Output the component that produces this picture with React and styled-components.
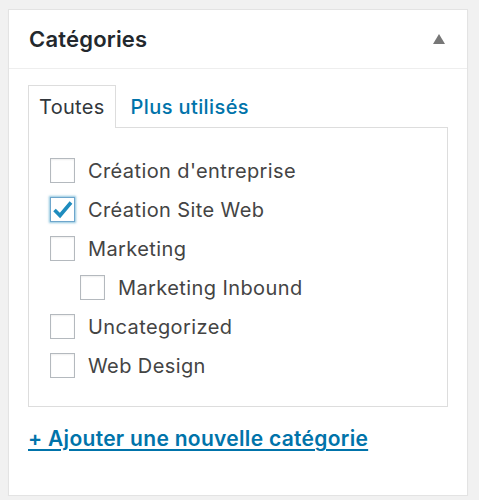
import styled, { createGlobalStyle } from "styled-components";

const Global = createGlobalStyle`
  body {
    margin: 0;
    background: #f1f1f1;
    font-family: Inter, "Noto Sans", "DejaVu Sans", sans-serif;
  }
`;

const Panel = styled.div`
  margin: 9px 0 0 8px;
  width: 458px;
  background: #fff;
  border: 1px solid #e3e3e3;
  box-shadow: 0 1px 1px rgba(0, 0, 0, 0.04);
`;

const Header = styled.div`
  height: 58px;
  padding: 0 22px 0 20px;
  display: flex;
  align-items: center;
  justify-content: space-between;
  border-bottom: 1px solid #eeeeee;
`;

const Title = styled.h2`
  margin: 0;
  font-size: 22px;
  letter-spacing: 0.2px;
  font-weight: 600;
  color: #23282d;
`;

const Toggle = styled.span`
  width: 0;
  height: 0;
  border-left: 6px solid transparent;
  border-right: 6px solid transparent;
  border-bottom: 10px solid #777;
`;

const Body = styled.div`
  padding: 16px 19px 44px 19px;
`;

const Tabs = styled.div`
  display: flex;
  align-items: flex-end;
  gap: 14px;
`;

const Tab = styled.div`
  height: 42px;
  padding: 0 ${(p) => (p.$active ? "10px" : "0")};
  display: flex;
  align-items: center;
  font-size: 20px;
  letter-spacing: ${(p) => (p.$active ? "0.3px" : "0.4px")};
  color: ${(p) => (p.$active ? "#32373c" : "#0073aa")};
  font-weight: ${(p) => (p.$active ? 400 : 500)};
  background: ${(p) => (p.$active ? "#fff" : "transparent")};
  border: 1px solid ${(p) => (p.$active ? "#dddddd" : "transparent")};
  border-bottom: none;
  margin-bottom: -1px;
  position: relative;
`;

const TabPanel = styled.div`
  box-sizing: border-box;
  width: 420px;
  border: 1px solid #dddddd;
  padding: 30px 0 28px 21px;
`;

const List = styled.ul`
  list-style: none;
  margin: 0;
  padding: 0;
  display: flex;
  flex-direction: column;
  gap: 14px;
`;

const Children = styled(List)`
  margin-top: 14px;
  margin-left: 30px;
`;

const Row = styled.label`
  display: flex;
  align-items: center;
  gap: 13px;
  font-size: 20px;
  letter-spacing: 0.4px;
  color: #444;
  height: 25px;
`;

const Box = styled.span`
  box-sizing: border-box;
  flex: none;
  width: 25px;
  height: 25px;
  border: 1px solid ${(p) => (p.$checked ? "#6ea6cc" : "#b4b9be")};
  box-shadow: ${(p) =>
    p.$checked ? "0 0 2px 1px rgba(30, 140, 190, 0.5)" : "inset 0 1px 2px rgba(0,0,0,0.07)"};
  display: flex;
  align-items: center;
  justify-content: center;
`;

const AddLink = styled.a`
  display: inline-block;
  margin-top: 19px;
  font-size: 21px;
  letter-spacing: 0.3px;
  font-weight: 600;
  color: #0073aa;
  text-decoration: underline;
  text-underline-offset: 3px;
`;

const Check = () => (
  <svg width="21" height="19" viewBox="0 0 21 19">
    <path d="M2.5 10l5.5 5.5 11-13" fill="none" stroke="#1e8cbe" strokeWidth="3.6" />
  </svg>
);

const Item = ({ label, checked, children }) => (
  <li>
    <Row>
      <Box $checked={checked}>{checked && <Check />}</Box>
      {label}
    </Row>
    {children}
  </li>
);

export default function App() {
  return (
    <>
      <Global />
      <Panel>
        <Header>
          <Title>Catégories</Title>
          <Toggle />
        </Header>
        <Body>
          <Tabs>
            <Tab $active>Toutes</Tab>
            <Tab>Plus utilisés</Tab>
          </Tabs>
          <TabPanel>
            <List>
              <Item label="Création d'entreprise" />
              <Item label="Création Site Web" checked />
              <Item label="Marketing">
                <Children>
                  <Item label="Marketing Inbound" />
                </Children>
              </Item>
              <Item label="Uncategorized" />
              <Item label="Web Design" />
            </List>
          </TabPanel>
          <AddLink href="#">+ Ajouter une nouvelle catégorie</AddLink>
        </Body>
      </Panel>
    </>
  );
}
